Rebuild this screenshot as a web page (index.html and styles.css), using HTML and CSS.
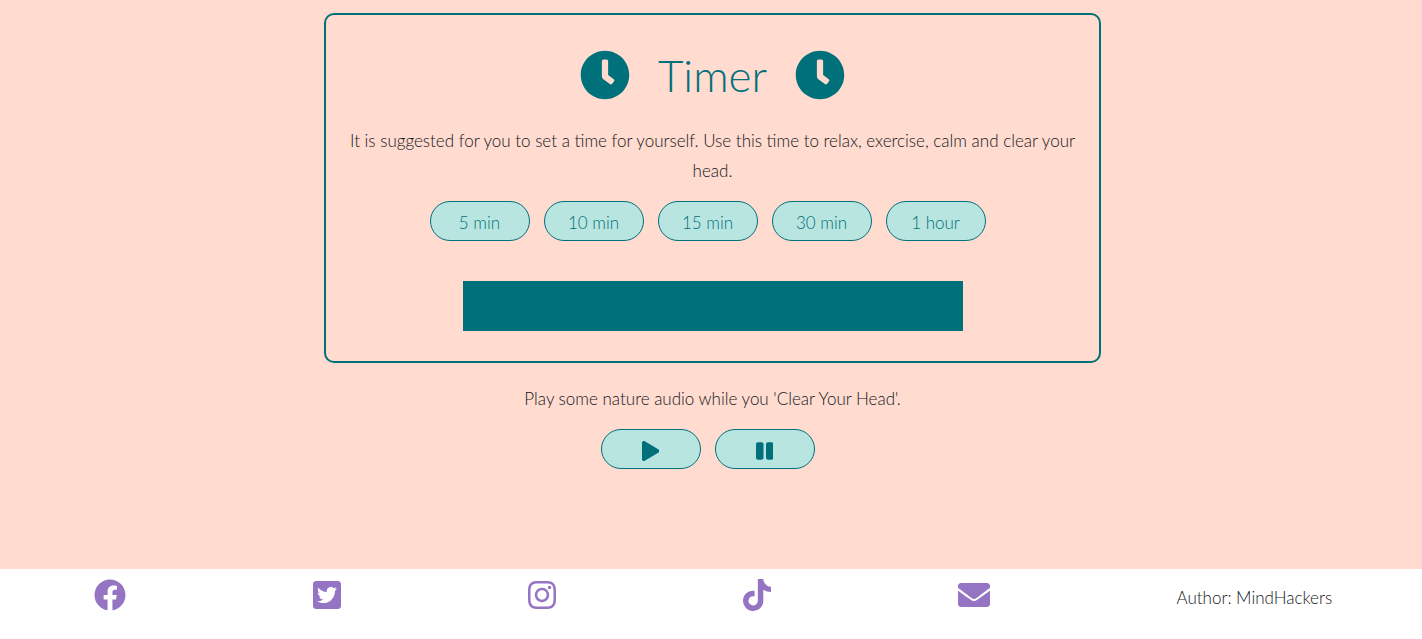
FILE: index.html
```html
<!DOCTYPE html>
<html lang="en">
<head>
<meta charset="utf-8">
<meta name="viewport" content="width=device-width, initial-scale=1">
<title>Timer</title>
<link rel="stylesheet" href="styles.css">
</head>
<body>
<svg class="defs" aria-hidden="true">
  <symbol id="clock" viewBox="0 0 512 512"><path d="M256,8C119,8,8,119,8,256S119,504,256,504,504,393,504,256,393,8,256,8Zm92.49,313h0l-20,25a16,16,0,0,1-22.49,2.5h0l-67-49.72a40,40,0,0,1-15-31.23V112a16,16,0,0,1,16-16h32a16,16,0,0,1,16,16V256l58,42.5A16,16,0,0,1,348.49,321Z"/></symbol>
</svg>
<main class="main">
  <section class="timer">
    <h1 class="title">
      <svg class="clock" aria-hidden="true"><use href="#clock"/></svg>
      <span>Timer</span>
      <svg class="clock" aria-hidden="true"><use href="#clock"/></svg>
    </h1>
    <p class="text">It is suggested for you to set a time for yourself. Use this time to relax, exercise, calm and clear your head.</p>
    <div class="buttons">
      <button class="pill" type="button">5 min</button>
      <button class="pill" type="button">10 min</button>
      <button class="pill" type="button">15 min</button>
      <button class="pill" type="button">30 min</button>
      <button class="pill" type="button">1 hour</button>
    </div>
    <div class="bar"></div>
  </section>
  <section class="audio">
    <p class="text">Play some nature audio while you 'Clear Your Head'.</p>
    <div class="buttons">
      <button class="pill" type="button" aria-label="Play"><svg class="control" viewBox="0 0 448 512" aria-hidden="true"><path d="M424.4 214.7L72.4 6.6C43.8-10.3 0 6.1 0 47.9V464c0 37.5 40.7 60.1 72.4 41.3l352-208c31.4-18.5 31.5-64.1 0-82.6z"/></svg></button>
      <button class="pill" type="button" aria-label="Pause"><svg class="control" viewBox="0 0 448 512" aria-hidden="true"><path d="M144 479H48c-26.5 0-48-21.5-48-48V79c0-26.5 21.5-48 48-48h96c26.5 0 48 21.5 48 48v352c0 26.5-21.5 48-48 48zm304-48V79c0-26.5-21.5-48-48-48h-96c-26.5 0-48 21.5-48 48v352c0 26.5 21.5 48 48 48h96c26.5 0 48-21.5 48-48z"/></svg></button>
    </div>
  </section>
</main>
<footer class="footer">
  <a class="social" href="#" aria-label="Facebook"><svg class="wide" viewBox="0 0 512 512"><path d="M504 256C504 119 393 8 256 8S8 119 8 256c0 123.78 90.69 226.38 209.25 245V327.69h-63V256h63v-54.64c0-62.15 37-96.48 93.67-96.48 27.14 0 55.52 4.84 55.52 4.84v61h-31.28c-30.8 0-40.41 19.12-40.41 38.73V256h68.78l-11 71.69h-57.78V501C413.31 482.38 504 379.78 504 256z"/></svg></a>
  <a class="social" href="#" aria-label="Twitter"><svg class="narrow" viewBox="0 0 448 512"><path d="M400 32H48C21.5 32 0 53.5 0 80v352c0 26.5 21.5 48 48 48h352c26.5 0 48-21.5 48-48V80c0-26.5-21.5-48-48-48zm-48.9 158.8c.2 2.8.2 5.7.2 8.5 0 86.7-66 186.6-186.6 186.6-37.2 0-71.7-10.8-100.7-29.4 5.3.6 10.4.8 15.8.8 30.7 0 58.9-10.4 81.4-28-28.8-.6-53-19.5-61.3-45.5 10.1 1.5 19.2 1.5 29.6-1.2-30-6.1-52.5-32.5-52.5-64.4v-.8c8.7 4.9 18.9 7.9 29.6 8.3a65.447 65.447 0 0 1-29.2-54.6c0-12.2 3.2-23.4 8.9-33.1 32.3 39.8 80.8 65.8 135.2 68.6-9.3-44.5 24-80.6 64-80.6 18.9 0 35.9 7.9 47.9 20.7 14.8-2.8 29-8.3 41.6-15.8-4.9 15.2-15.2 28-28.8 36.1 13.2-1.4 26-5.1 37.8-10.2-8.9 13.1-20.1 24.7-32.9 34z"/></svg></a>
  <a class="social" href="#" aria-label="Instagram"><svg class="narrow" viewBox="0 0 448 512"><path d="M224.1 141c-63.6 0-114.9 51.3-114.9 114.9s51.3 114.9 114.9 114.9S339 319.5 339 255.9 287.7 141 224.1 141zm0 189.6c-41.1 0-74.7-33.5-74.7-74.7s33.5-74.7 74.7-74.7 74.7 33.5 74.7 74.7-33.6 74.7-74.7 74.7zm146.4-194.3c0 14.9-12 26.8-26.8 26.8-14.9 0-26.8-12-26.8-26.8s12-26.8 26.8-26.8 26.8 12 26.8 26.8zm76.1 27.2c-1.7-35.9-9.9-67.7-36.2-93.9-26.2-26.2-58-34.4-93.9-36.2-37-2.1-147.9-2.1-184.9 0-35.8 1.7-67.6 9.9-93.9 36.1s-34.4 58-36.2 93.9c-2.1 37-2.1 147.9 0 184.9 1.7 35.9 9.9 67.7 36.2 93.9s58 34.4 93.9 36.2c37 2.1 147.9 2.1 184.9 0 35.9-1.7 67.7-9.9 93.9-36.2 26.2-26.2 34.4-58 36.2-93.9 2.1-37 2.1-147.8 0-184.8zM398.8 388c-7.8 19.6-22.9 34.7-42.6 42.6-29.5 11.7-99.5 9-132.1 9s-102.7 2.6-132.1-9c-19.6-7.8-34.7-22.9-42.6-42.6-11.7-29.5-9-99.5-9-132.1s-2.6-102.7 9-132.1c7.8-19.6 22.9-34.7 42.6-42.6 29.5-11.7 99.5-9 132.1-9s102.7-2.6 132.1 9c19.6 7.8 34.7 22.9 42.6 42.6 11.7 29.5 9 99.5 9 132.1s2.7 102.7-9 132.1z"/></svg></a>
  <a class="social" href="#" aria-label="TikTok"><svg class="narrow" viewBox="0 0 448 512"><path d="M448,209.91a210.06,210.06,0,0,1-122.77-39.25V349.38A162.55,162.55,0,1,1,185,188.31V278.2a74.62,74.62,0,1,0,52.23,71.18V0l88,0a121.18,121.18,0,0,0,1.86,22.17h0A122.18,122.18,0,0,0,381,102.39a121.43,121.43,0,0,0,67,20.14Z"/></svg></a>
  <a class="social" href="#" aria-label="Email"><svg class="wide" viewBox="0 0 512 512"><path d="M502.3 190.8c3.9-3.1 9.7-.2 9.7 4.7V400c0 26.5-21.5 48-48 48H48c-26.5 0-48-21.5-48-48V195.6c0-5 5.7-7.8 9.7-4.7 22.4 17.4 52.1 39.5 154.1 113.6 21.1 15.4 56.7 47.8 92.2 47.6 35.7.3 72-32.8 92.3-47.6 102-74.1 131.6-96.3 154-113.7zM256 320c23.2.4 56.6-29.2 73.4-41.4 132.7-96.3 142.8-104.7 173.4-128.7 5.8-4.5 9.2-11.5 9.2-18.9v-19c0-26.5-21.5-48-48-48H48c-26.5 0-48 21.5-48 48v19c0 7.4 3.4 14.3 9.2 18.9 30.6 23.9 40.7 32.4 173.4 128.7 16.8 12.2 50.2 41.8 73.4 41.4z"/></svg></a>
  <p class="author">Author: MindHackers</p>
</footer>
</body>
</html>
```
FILE: styles.css
```css
* { box-sizing: border-box; }

body {
  margin: 0;
  background: #ffdbd0;
  color: #15181b;
  font-family: Lato, "Open Sans", sans-serif;
  font-size: 17px;
  font-weight: 300;
  line-height: 30px;
}

.defs { display: none; }

.main { padding: 13px 14px 100px 17px; }

.timer {
  max-width: 777px;
  margin: 0 auto;
  padding: 30px 20px;
  border: 2px solid #00707a;
  border-radius: 10px;
}

.title {
  display: flex;
  justify-content: center;
  align-items: center;
  gap: 28px;
  margin: 0 0 21px;
  color: #00707a;
  font-size: 44px;
  font-weight: 300;
  line-height: 60px;
}

.clock {
  width: 50px;
  height: 50px;
  fill: #00707a;
}

.text {
  margin: 0 0 15px;
  text-align: center;
}

.buttons {
  display: flex;
  flex-wrap: wrap;
  justify-content: center;
  gap: 14px;
  padding-right: 10px;
}

.pill {
  display: flex;
  justify-content: center;
  align-items: center;
  width: 100px;
  height: 40px;
  padding: 4px 0 0;
  border: 1px solid #00707a;
  border-radius: 20px;
  background: #b9e5e0;
  color: #00707a;
  font: inherit;
  cursor: pointer;
}

.control {
  height: 20px;
  fill: #00707a;
}

.bar {
  max-width: 500px;
  height: 50px;
  margin: 40px auto 0;
  background: #00707a;
}

.audio { padding-top: 21px; }

.footer {
  display: flex;
  justify-content: space-around;
  align-items: flex-start;
  min-height: 70px;
  padding-top: 10px;
  background: #fff;
}

.social {
  display: flex;
  fill: #9575c3;
}

.wide { width: 32px; height: 32px; }

.narrow { width: 28px; height: 32px; }

.author {
  width: 152px;
  margin: 4px 0 0;
  white-space: nowrap;
}
```
